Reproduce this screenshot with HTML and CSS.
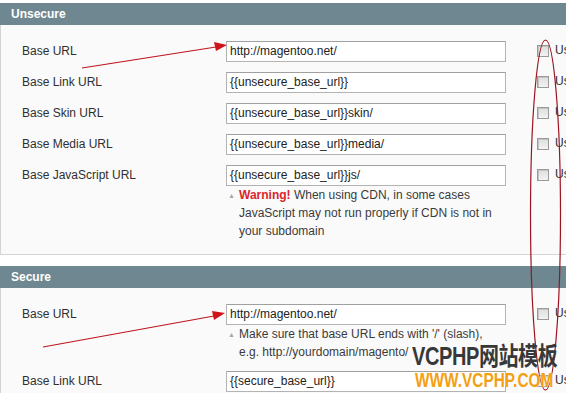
FILE: index.html
```html
<!DOCTYPE html>
<html lang="en">
<head>
    <meta charset="UTF-8">
    <title>Web - Base URLs</title>
    <link rel="stylesheet" href="styles.css">
</head>
<body>

<div class="page">

    <!-- unsecure urls -->
    <div class="section first">
        <div class="section-head">Unsecure</div>
        <div class="section-body">
            <div class="row">
                <label class="row-label">Base URL</label>
                <div class="row-value"><div class="input">http://magentoo.net/</div></div>
                <div class="row-scope"><i class="check"></i>Use Default</div>
            </div>
            <div class="row">
                <label class="row-label">Base Link URL</label>
                <div class="row-value"><div class="input">{{unsecure_base_url}}</div></div>
                <div class="row-scope"><i class="check"></i>Use Default</div>
            </div>
            <div class="row">
                <label class="row-label">Base Skin URL</label>
                <div class="row-value"><div class="input">{{unsecure_base_url}}skin/</div></div>
                <div class="row-scope"><i class="check"></i>Use Default</div>
            </div>
            <div class="row">
                <label class="row-label">Base Media URL</label>
                <div class="row-value"><div class="input">{{unsecure_base_url}}media/</div></div>
                <div class="row-scope"><i class="check"></i>Use Default</div>
            </div>
            <div class="row">
                <label class="row-label">Base JavaScript URL</label>
                <div class="row-value">
                    <div class="input">{{unsecure_base_url}}js/</div>
                    <p class="note"><span class="note-arrow">&#9650;</span><b class="warn">Warning!</b> When using CDN, in some cases JavaScript may not run properly if CDN is not in your subdomain</p>
                </div>
                <div class="row-scope"><i class="check"></i>Use Default</div>
            </div>
        </div>
    </div>

    <!-- secure urls -->
    <div class="section">
        <div class="section-head">Secure</div>
        <div class="section-body">
            <div class="row">
                <label class="row-label">Base URL</label>
                <div class="row-value">
                    <div class="input">http://magentoo.net/</div>
                    <p class="note"><span class="note-arrow">&#9650;</span>Make sure that base URL ends with '/' (slash),<br>e.g. http://yourdomain/magento/</p>
                </div>
                <div class="row-scope"><i class="check"></i>Use Default</div>
            </div>
            <div class="row">
                <label class="row-label">Base Link URL</label>
                <div class="row-value"><div class="input">{{secure_base_url}}</div></div>
                <div class="row-scope"><i class="check"></i>Use Default</div>
            </div>
        </div>
    </div>

</div>

<!-- hand drawn marks on top of the screenshot -->
<svg class="marks" width="566" height="393" viewBox="0 0 566 393">
    <line x1="82" y1="68" x2="216" y2="47" stroke="#c0141c" stroke-width="1.2"/>
    <polygon points="227,45 214,42 216,51" fill="#d0121a"/>
    <line x1="43" y1="347" x2="214" y2="316" stroke="#c0141c" stroke-width="1.2"/>
    <polygon points="225,313 212,311 214,320" fill="#d0121a"/>
    <ellipse cx="545.5" cy="215" rx="15" ry="175" fill="none" stroke="#9c1420" stroke-width="1.2"/>
</svg>

<div class="watermark">
    <div class="wm-title">VCPHP网站模板</div>
    <div class="wm-url">WWW.VCPHP.COM</div>
</div>

</body>
</html>
```

FILE: styles.css
```css
html, body{
    margin: 0;
    padding: 0;
    background: #fff;
}
body{
    position: relative;
    width: 566px;
    height: 393px;
    overflow: hidden;
    font: 12px/18px "Liberation Sans", Arial, sans-serif;
    color: #2f2f2f;
}
.page{
    width: 700px;
    padding-top: 3px;
}

.section{  margin-top: 11px;  }
.section.first{  margin-top: 0;  }
.section-head{
    height: 22px;
    line-height: 22px;
    padding-left: 11px;
    background: #6f8790;
    color: #fff;
    font-weight: bold;
}
.section-body{
    background: #fafafa;
    border-left: 1px solid #d4d4d4;
    border-bottom: 1px solid #d4d4d4;
    padding: 16px 0 14px 21px;
}

.row{
    display: grid;
    grid-template-columns: 204px 280px 31px auto;
    margin-bottom: 10px;
}
.row:last-child{  margin-bottom: 0;  }
.row-label{
    padding-top: 1px;
    line-height: 18px;
}
.input{
    height: 19px;
    line-height: 19px;
    padding-left: 3px;
    border: 1px solid #b3b3b3;
    border-top-color: #a0a0a0;
    background: #fff;
    color: #222;
    white-space: nowrap;
    overflow: hidden;
}
.note{
    margin: 0;
    padding: 0 0 0 13px;
    text-indent: -13px;
    line-height: 18px;
    color: #3a3a3a;
}
.note-arrow{
    display: inline-block;
    width: 13px;
    text-indent: 0;
    padding-left: 2px;
    box-sizing: border-box;
    font-size: 7px;
    line-height: 10px;
    color: #a8a8a8;
    vertical-align: 1px;
}
.warn{  color: #d9262c;  }

.row-scope{
    grid-column: 4;
    display: flex;
    align-items: flex-start;
    gap: 6px;
    line-height: 19px;
    white-space: nowrap;
}
.check{
    width: 10px;
    height: 10px;
    margin-top: 4px;
    border: 1px solid #9a9a9a;
    background: linear-gradient(#dedede, #f2f2f2);
    box-shadow: inset 1px 1px 0 #c4c4c4;
}

.marks{
    position: absolute;
    left: 0;
    top: 0;
    pointer-events: none;
}

.watermark{
    position: absolute;
    left: 412px;
    top: 343px;
    font-family: "Liberation Sans", "Noto Sans CJK SC", sans-serif;
    font-weight: bold;
    white-space: nowrap;
}
.wm-title{
    font-size: 25px;
    line-height: 27px;
    color: #383838;
    transform: scaleX(0.8);
    transform-origin: left top;
    letter-spacing: -0.5px;
}
.wm-url{
    margin-left: 3px;
    font-size: 20px;
    line-height: 20px;
    color: #f5a013;
    transform: scaleX(0.77);
    transform-origin: left top;
    text-shadow: 0 0 2px #fff;
}
```
